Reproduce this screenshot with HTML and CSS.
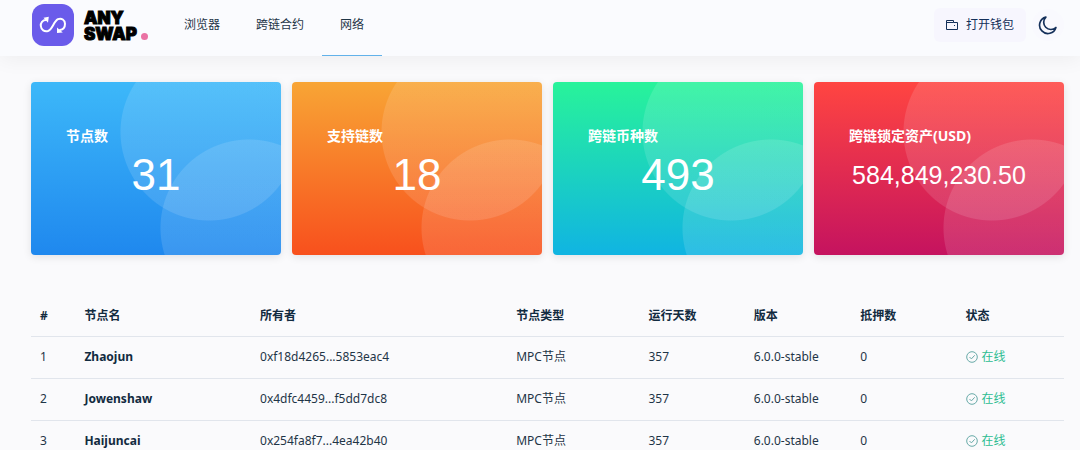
FILE: index.html
```html
<!DOCTYPE html>
<html lang="zh-CN">
<head>
<meta charset="utf-8">
<meta name="viewport" content="width=device-width, initial-scale=1">
<title>Anyswap</title>
<link rel="stylesheet" href="styles.css">
</head>
<body>
<header class="header">
  <a class="brand" href="#">
    <svg class="brand-mark" viewBox="0 0 42 42" aria-hidden="true">
      <rect width="42" height="42" rx="12" fill="#6a5bea"/>
      <path d="M14 16C10.500 16 8.500 19 8.800 22C9.200 26 12.500 28 16 27C20.500 25.500 21.500 17.500 26 15.200C29.500 13.700 33 16 33 19.800C33 23 31 25.600 28 26" fill="none" stroke="#fff" stroke-width="2" stroke-linecap="round"/>
      <path d="M11.500 13.800L16.800 12.800L16 18.800ZM25 23.400L30.800 28.600L25 29Z" fill="#fff"/>
    </svg>
    <span class="brand-name">ANY<br>SWAP<i class="brand-dot"></i></span>
  </a>
  <nav class="nav">
    <a class="nav-link" href="#">浏览器</a>
    <a class="nav-link" href="#">跨链合约</a>
    <a class="nav-link active" href="#" aria-current="page">网络</a>
  </nav>
  <div class="actions">
    <button class="wallet" type="button">
      <svg class="wallet-icon" viewBox="0 0 12 12" fill="none" stroke="currentColor" aria-hidden="true">
        <path d="M.5 10.500V1.500H7.500V3.500H11.500V10.500ZM.5 3.500H7.500"/>
        <path d="M8 6.500H9"/>
      </svg>
      打开钱包
    </button>
    <button class="theme" type="button" aria-label="切换主题">
      <svg class="theme-icon" viewBox="0 0 24 24" fill="none" stroke="currentColor" stroke-width="2" stroke-linejoin="round" aria-hidden="true">
        <path d="M21.500 15A10 10 0 1 1 9.500 2.500A8.500 8.500 0 0 0 21.500 15Z"/>
      </svg>
    </button>
  </div>
</header>
<main class="main">
  <section class="cards">
    <article class="card blue"><h2 class="card-title">节点数</h2><p class="card-value">31</p></article>
    <article class="card orange"><h2 class="card-title">支持链数</h2><p class="card-value">18</p></article>
    <article class="card green"><h2 class="card-title">跨链币种数</h2><p class="card-value">493</p></article>
    <article class="card red"><h2 class="card-title">跨链锁定资产(USD)</h2><p class="card-value long">584,849,230.50</p></article>
  </section>
  <table class="nodes">
    <colgroup>
      <col class="col-index"><col class="col-name"><col class="col-owner"><col class="col-type"><col class="col-days"><col class="col-version"><col class="col-stake"><col class="col-status">
    </colgroup>
    <thead>
      <tr><th>#</th><th>节点名</th><th>所有者</th><th>节点类型</th><th>运行天数</th><th>版本</th><th>抵押数</th><th>状态</th></tr>
    </thead>
    <tbody>
      <tr><td>1</td><td class="name">Zhaojun</td><td>0xf18d4265...5853eac4</td><td>MPC节点</td><td>357</td><td>6.0.0-stable</td><td>0</td>
        <td><span class="status"><svg class="status-icon" viewBox="0 0 12 12" aria-hidden="true"><circle cx="6" cy="6" r="5.300"/><path d="M3.500 6L5.400 7.900L8.700 4.300"/></svg>在线</span></td></tr>
      <tr><td>2</td><td class="name">Jowenshaw</td><td>0x4dfc4459...f5dd7dc8</td><td>MPC节点</td><td>357</td><td>6.0.0-stable</td><td>0</td>
        <td><span class="status"><svg class="status-icon" viewBox="0 0 12 12" aria-hidden="true"><circle cx="6" cy="6" r="5.300"/><path d="M3.500 6L5.400 7.900L8.700 4.300"/></svg>在线</span></td></tr>
      <tr><td>3</td><td class="name">Haijuncai</td><td>0x254fa8f7...4ea42b40</td><td>MPC节点</td><td>357</td><td>6.0.0-stable</td><td>0</td>
        <td><span class="status"><svg class="status-icon" viewBox="0 0 12 12" aria-hidden="true"><circle cx="6" cy="6" r="5.300"/><path d="M3.500 6L5.400 7.900L8.700 4.300"/></svg>在线</span></td></tr>
    </tbody>
  </table>
</main>
</body>
</html>
```
FILE: styles.css
```css
* {
  box-sizing: border-box;
}

body {
  margin: 0;
  background: #fafafc;
  color: #1f3547;
  font: 12px/18px "Noto Sans", "Noto Sans CJK SC", sans-serif;
}

.header {
  display: flex;
  height: 56px;
  padding: 0 16px 0 32px;
  background: #fafbfe;
  box-shadow: 0 4px 20px rgba(0, 0, 0, 0.05);
}

.brand {
  display: flex;
  align-items: center;
  gap: 10px;
  padding: 0 0 7px;
  color: #000;
  text-decoration: none;
}

.brand-mark {
  width: 42px;
  height: 42px;
}

.brand-name {
  padding-top: 2px;
  font: 900 17px/16px Inter, sans-serif;
  -webkit-text-stroke: 1px #000;
}

.brand-dot {
  display: inline-block;
  width: 7px;
  height: 7px;
  margin-left: 4px;
  border-radius: 50%;
  background: #ea72a4;
}

.nav {
  display: flex;
  margin-left: 18px;
}

.nav-link {
  display: flex;
  align-items: center;
  padding: 0 18px 6px;
  border-bottom: 1px solid transparent;
  color: #1f3547;
  text-decoration: none;
}

.nav-link.active {
  border-bottom-color: #62b2ea;
}

.actions {
  display: flex;
  align-items: center;
  gap: 6px;
  margin-left: auto;
  padding-bottom: 7px;
}

.wallet {
  display: flex;
  align-items: center;
  gap: 8px;
  height: 34px;
  padding: 0 12px;
  border: 0;
  border-radius: 6px;
  background: #f7f6fe;
  color: #14305a;
  font: inherit;
}

.wallet-icon {
  width: 12px;
  height: 12px;
}

.theme {
  display: grid;
  place-items: center;
  width: 32px;
  height: 32px;
  padding: 0;
  border: 0;
  border-radius: 50%;
  background: #f9f9fe;
  color: #14305a;
}

.theme-icon {
  width: 20px;
  height: 20px;
}

.main {
  padding: 26px 16px 0 31px;
}

.cards {
  display: grid;
  grid-template-columns: repeat(4, 1fr);
  gap: 11px;
}

.card {
  min-height: 173px;
  padding: 44px 16px 0;
  border-radius: 4px;
  background:
    radial-gradient(circle at 218px 146px, rgba(255, 255, 255, 0.12) 88px, transparent 89px),
    radial-gradient(circle at 178px 50px, rgba(255, 255, 255, 0.12) 88px, transparent 89px),
    var(--fill);
  box-shadow: 0 2px 8px rgba(0, 0, 0, 0.1);
  color: #fff;
}

.blue {
  --fill: linear-gradient(#3db8f9, #1f88ee);
}

.orange {
  --fill: linear-gradient(#f8a535, #f8501d);
}

.green {
  --fill: linear-gradient(#28f39a, #10b4e2);
}

.red {
  --fill: linear-gradient(#ff4541, #c5135f);
}

.card-title {
  margin: 0 19px;
  font-size: 14px;
  font-weight: 700;
  line-height: 20px;
}

.card-value {
  margin: 4px 0 0;
  font: 44px/50px "Liberation Sans", sans-serif;
  text-align: center;
}

.card-value.long {
  font-size: 25px;
}

.nodes {
  width: 100%;
  margin-top: 39px;
  border-collapse: collapse;
  table-layout: fixed;
}

.col-index { width: 4.300%; }
.col-name { width: 17%; }
.col-owner { width: 24.800%; }
.col-type { width: 12.800%; }
.col-days { width: 10.200%; }
.col-version { width: 10.300%; }
.col-stake { width: 10.200%; }

.nodes th,
.nodes td {
  height: 42px;
  padding: 0 9px;
  border-bottom: 1px solid #e1e5ec;
  text-align: left;
  white-space: nowrap;
}

.nodes th {
  padding-top: 3px;
}

.nodes th,
.nodes .name {
  color: #122b40;
  font-weight: 700;
}

.status {
  display: flex;
  align-items: center;
  gap: 4px;
  color: #2dbd92;
}

.status-icon {
  width: 12px;
  height: 12px;
  fill: none;
  stroke: #68aaa8;
}
```
